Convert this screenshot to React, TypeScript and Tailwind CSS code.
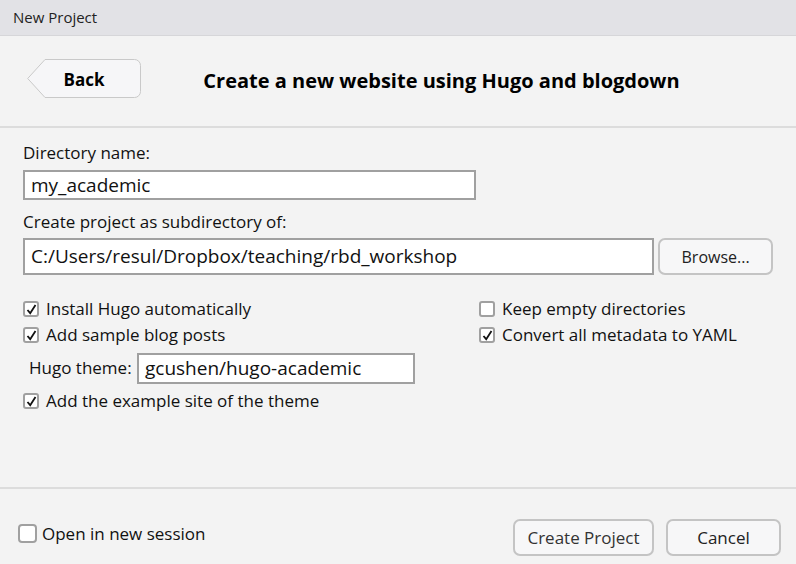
import type { ReactNode } from 'react';

const font = { fontFamily: '"Open Sans", "Noto Sans", sans-serif' };

function CheckBox({ checked }: { checked: boolean }) {
    return (
        <span className="w-[16px] h-[16px] rounded-[3px] border-2 border-[#a0a0a0] bg-white flex items-center justify-center shrink-0">
            {checked && (
                <svg width="11" height="11" viewBox="0 0 11 11">
                    <path d="M1.5 6 L4.2 9.2 L9.5 1" fill="none" stroke="#111" strokeWidth="1.8" />
                </svg>
            )}
        </span>
    );
}

function Check({ checked, children }: { checked: boolean; children: ReactNode }) {
    return (
        <label className="flex items-center gap-[7px] h-[26px] text-[17px] text-[#111]">
            <CheckBox checked={checked} />
            <span>{children}</span>
        </label>
    );
}

function Button({ children, className }: { children: ReactNode; className: string }) {
    return (
        <button className={`h-[37px] rounded-[7px] border-2 border-[#c4c4c4] bg-[#f7f7f8] text-[#222] ${className}`}>
            {children}
        </button>
    );
}

function BackButton() {
    return (
        <button className="relative w-[114px] h-[39px] mb-[6px] flex items-center justify-center">
            <svg className="absolute inset-0" width="114" height="39" viewBox="0 0 114 39">
                <path
                    d="M18 0.5 H107.5 A6 6 0 0 1 113.5 6.5 V32.5 A6 6 0 0 1 107.5 38.5 H18 L0.7 19.5 Z"
                    fill="#f6f6f8"
                    stroke="#c9c9c9"
                    strokeWidth="1"
                />
            </svg>
            <span className="relative text-[17px] font-bold text-black mt-[3px]">Back</span>
        </button>
    );
}

export default function App() {
    return (
        <div className="w-[796px] h-[564px] flex flex-col bg-[#f3f3f3] overflow-hidden" style={font}>
            {/* Title bar */}
            <div className="h-[36px] bg-[#e2e2e6] border-b border-[#d6d6d9] flex items-center px-[13px] text-[15px] text-[#222] shrink-0">
                New Project
            </div>

            {/* Header */}
            <header className="h-[92px] border-b-2 border-[#dcdcdc] flex items-center pl-[27px] shrink-0">
                <BackButton />
                <h1 className="flex-1 text-center pr-[54px] text-[20px] font-bold text-black">
                    Create a new website using Hugo and blogdown
                </h1>
            </header>

            {/* Form */}
            <main className="flex-1 px-[23px] pt-[14px] text-[17px] text-[#111]">
                <div className="leading-[22px]">Directory name:</div>
                <div className="mt-[6px] w-[453px] h-[30px] border-2 border-[#a0a0a0] bg-white px-[6px] flex items-center text-[19px]">
                    my_academic
                </div>

                <div className="mt-[11px] leading-[22px]">Create project as subdirectory of:</div>
                <div className="mt-[5px] flex gap-[4px]">
                    <div className="w-[632px] h-[37px] border-2 border-[#a0a0a0] bg-white px-[6px] flex items-center text-[19px]">
                        C:/Users/resul/Dropbox/teaching/rbd_workshop
                    </div>
                    <Button className="w-[115px] text-[16px]">Browse...</Button>
                </div>

                <div className="mt-[21px] flex">
                    <div className="w-[456px] flex flex-col">
                        <Check checked>Install Hugo automatically</Check>
                        <Check checked>Add sample blog posts</Check>
                        <div className="flex items-center h-[40px] pl-[6px]">
                            <span className="w-[108px]">Hugo theme:</span>
                            <div className="w-[278px] h-[31px] border-2 border-[#a0a0a0] bg-white px-[6px] flex items-center text-[19px]">
                                gcushen/hugo-academic
                            </div>
                        </div>
                        <Check checked>Add the example site of the theme</Check>
                    </div>
                    <div className="flex flex-col">
                        <Check checked={false}>Keep empty directories</Check>
                        <Check checked>Convert all metadata to YAML</Check>
                    </div>
                </div>
            </main>

            {/* Footer */}
            <footer className="h-[77px] border-t-2 border-[#dcdcdc] flex items-end pb-[8px] pl-[18px] pr-[15px] shrink-0">
                <label className="flex items-center gap-[5px] text-[17px] text-[#111] mb-[10px]">
                    <span className="w-[19px] h-[19px] rounded-[4px] border-2 border-[#a0a0a0] bg-white" />
                    Open in new session
                </label>
                <div className="ml-auto flex gap-[12px]">
                    <Button className="w-[141px] text-[17px] text-[#333]">Create Project</Button>
                    <Button className="w-[115px] text-[17px]">Cancel</Button>
                </div>
            </footer>
        </div>
    );
}
